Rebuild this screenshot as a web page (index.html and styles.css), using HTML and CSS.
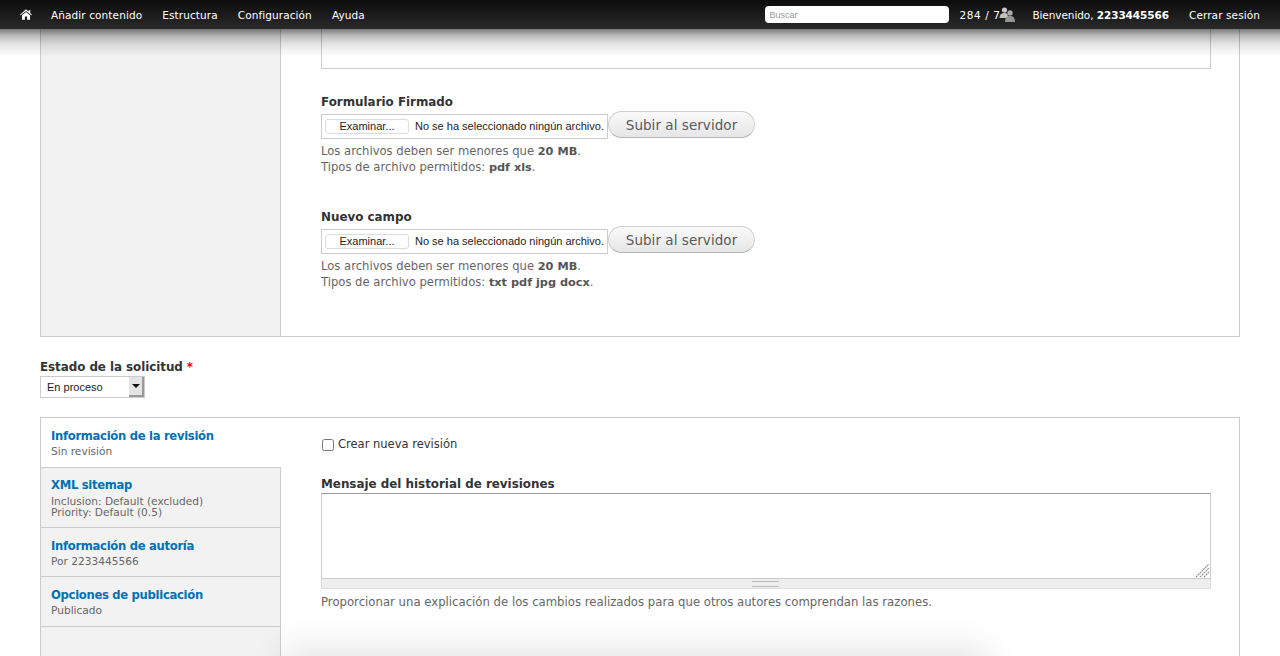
FILE: index.html
```html
<!DOCTYPE html>
<html lang="es">
  <head>
    <meta charset="UTF-8" />
    <title>Editar solicitud</title>
    <link rel="stylesheet" href="styles.css">
  </head>
  <body>
    <div class="toolbar">
      <nav class="toolbar-menu">
        <a class="home-link" href="#">
          <svg width="12" height="11" viewBox="0 0 14 12"><path fill="#fff" d="M7 0 L10 2.7 V1 H12 V4.5 L14 6.3 L13.2 7 L7 1.8 L.8 7 L0 6.3 Z M2.3 7 L7 3 L11.7 7 V12 H8.3 V8.3 H5.7 V12 H2.3 Z"/></svg>
        </a>
        <a href="#">Añadir contenido</a>
        <a href="#">Estructura</a>
        <a href="#">Configuración</a>
        <a href="#">Ayuda</a>
      </nav>
      <div class="toolbar-user">
        <input class="search" type="text" placeholder="Buscar" />
        <span class="counter">284 / 7</span>
        <svg class="users-icon" width="16" height="15" viewBox="0 0 16 15">
          <circle cx="5.5" cy="3" r="2.6" fill="#c8c8c8"/>
          <path fill="#c0c0c0" d="M.5 11 C.5 7 3 6 5.5 6 C8 6 9 7 9 11 Z"/>
          <circle cx="11" cy="6" r="2.7" fill="#a8a8a8"/>
          <path fill="#949494" d="M6 15 C6 10.5 8 9 11 9 C14 9 16 10.5 16 15 Z"/>
        </svg>
        <span class="welcome">Bienvenido, <strong>2233445566</strong></span>
        <a href="#">Cerrar sesión</a>
      </div>
    </div>

    <div class="page">
      <section class="panel files-panel">
        <div class="panel-side"></div>
        <div class="panel-main">
          <div class="old-text"></div>

          <div class="form-item">
            <label>Formulario Firmado</label>
            <div class="file-row">
              <div class="file-input">
                <span class="file-btn">Examinar...</span>
                <span>No se ha seleccionado ningún archivo.</span>
              </div>
              <button class="submit-btn">Subir al servidor</button>
            </div>
            <p class="description">Los archivos deben ser menores que <strong>20 MB</strong>.<br>Tipos de archivo permitidos: <strong>pdf xls</strong>.</p>
          </div>

          <div class="form-item">
            <label>Nuevo campo</label>
            <div class="file-row">
              <div class="file-input">
                <span class="file-btn">Examinar...</span>
                <span>No se ha seleccionado ningún archivo.</span>
              </div>
              <button class="submit-btn">Subir al servidor</button>
            </div>
            <p class="description">Los archivos deben ser menores que <strong>20 MB</strong>.<br>Tipos de archivo permitidos: <strong>txt pdf jpg docx</strong>.</p>
          </div>
        </div>
      </section>

      <div class="status-item">
        <label>Estado de la solicitud <span class="required">*</span></label>
        <div class="select-box">
          <span>En proceso</span>
          <span class="select-arrow"></span>
        </div>
      </div>

      <section class="panel tabs-panel">
        <ul class="tabs">
          <li class="tab active"><a href="#">Información de la revisión</a><small>Sin revisión</small></li>
          <li class="tab tab-sitemap"><a href="#">XML sitemap</a><small>Inclusion: Default (excluded)</small><small>Priority: Default (0.5)</small></li>
          <li class="tab tab-author"><a href="#">Información de autoría</a><small>Por 2233445566</small></li>
          <li class="tab"><a href="#">Opciones de publicación</a><small>Publicado</small></li>
        </ul>
        <div class="tab-pane">
          <div class="check-row">
            <input type="checkbox" id="new-revision" />
            <label for="new-revision">Crear nueva revisión</label>
          </div>
          <label class="log-label" for="log">Mensaje del historial de revisiones</label>
          <div class="textarea-wrap">
            <textarea id="log"></textarea>
            <svg class="resize-grip" width="15" height="15" viewBox="0 0 15 15">
              <path stroke="#8c8c8c" stroke-width="1.1" stroke-dasharray="2 .6" fill="none" d="M1 14 L14 1 M5 14 L14 5 M9 14 L14 9"/>
            </svg>
          </div>
          <div class="grippie"></div>
          <p class="description wide">Proporcionar una explicación de los cambios realizados para que otros autores comprendan las razones.</p>
        </div>
      </section>
    </div>

    <div class="bottom-shade"></div>
  </body>
</html>
```

FILE: styles.css
```css
html, body {
  margin: 0;
  height: 656px;
  overflow: hidden;
  background: #fff;
}

body {
  font-family: "DejaVu Sans", sans-serif;
  font-size: 11.9px;
  color: #333;
}

a {
  text-decoration: none;
}

/* toolbar */
.toolbar {
  position: fixed;
  top: 0;
  left: 0;
  right: 0;
  height: 29px;
  z-index: 10;
  display: flex;
  justify-content: space-between;
  align-items: center;
  padding: 0 20px;
  background: linear-gradient(#0c0c0c, #2a2a2a);
  color: #fff;
  font-size: 10.5px;
  letter-spacing: 0.1px;
}

/* soft shadow under the bar */
.toolbar::after {
  content: "";
  position: absolute;
  left: 0;
  right: 0;
  top: 29px;
  height: 28px;
  background: linear-gradient(rgba(0, 0, 0, 0.52), rgba(0, 0, 0, 0.26) 25%, rgba(0, 0, 0, 0.1) 55%, rgba(0, 0, 0, 0));
}

.toolbar a {
  color: #fff;
}

.toolbar-menu {
  display: flex;
  align-items: center;
  gap: 20px;
}

.home-link {
  display: flex;
  margin-right: -1px;
}

.toolbar-user {
  display: flex;
  align-items: center;
}

.search {
  width: 184px;
  height: 17px;
  box-sizing: border-box;
  margin: 0 10px 0 0;
  padding: 0 4px;
  border: 0;
  border-radius: 4px;
  background: #fff;
  font-family: "Liberation Sans", sans-serif;
  font-size: 9px;
}

.search::placeholder {
  color: #999;
}

.counter {
  letter-spacing: 0.6px;
  width: 40px;
  white-space: nowrap;
}

.users-icon {
  margin: 0 17px 0 0;
}

.welcome {
  margin-right: 20px;
  letter-spacing: -0.08px;
}

/* panels */
.page {
  padding: 0 40px;
}

.panel {
  display: flex;
  border: 1px solid #ccc;
  background: #fff;
}

.files-panel {
  height: 337px;
  box-sizing: border-box;
  border-top: 0;
}

.panel-side {
  width: 239px;
  background: #f2f2f2;
  border-right: 1px solid #ccc;
}

.panel-main {
  flex: 1;
  padding: 0 28px 0 40px;
}

.old-text {
  height: 68px;
  border: 1px solid #ccc;
  border-top: 0;
}

.form-item {
  margin-top: 26px;
  height: 90px;
}

.form-item + .form-item {
  margin-top: 25px;
}

label {
  font-weight: bold;
  color: #333;
  display: block;
}

.form-item label {
  line-height: 15px;
  margin-bottom: 4px;
}

.file-row {
  display: flex;
  align-items: flex-start;
  margin-top: -3px;
}

.file-input {
  width: 287px;
  height: 25px;
  margin-top: 3px;
  box-sizing: border-box;
  border: 1px solid #ccc;
  display: flex;
  align-items: center;
  padding: 0 0 1px 3px;
  gap: 6px;
  font-family: "Liberation Sans", sans-serif;
  font-size: 11px;
  color: #222;
  white-space: nowrap;
}

.file-btn {
  width: 84px;
  height: 15px;
  flex: none;
  box-sizing: border-box;
  border: 1px solid #ddd;
  border-radius: 3px;
  background: #fff;
  text-align: center;
  line-height: 13px;
}

.submit-btn {
  width: 147px;
  height: 27px;
  padding: 1px 0 0;
  border: 1px solid #d0d0d0;
  border-bottom-color: #b4b4b4;
  border-radius: 14px;
  background: linear-gradient(#fafafa, #e6e6e6);
  font-family: "DejaVu Sans", sans-serif;
  font-size: 13.5px;
  letter-spacing: 0.05px;
  color: #5a5a5a;
}

.description {
  margin: 4px 0 0;
  color: #666;
  font-size: 11.6px;
  line-height: 16px;
}

.description strong {
  color: #555;
  font-size: 11.3px;
  line-height: 1;
}

.description.wide {
  margin-top: 5px;
  font-size: 11.7px;
}

/* status select */
.status-item {
  margin-top: 22px;
}

.status-item label {
  line-height: 16px;
  margin-bottom: 1px;
  letter-spacing: -0.05px;
}

.required {
  color: #e00;
}

.select-box {
  width: 105px;
  height: 22px;
  box-sizing: border-box;
  border: 1px solid #ccc;
  display: flex;
  justify-content: space-between;
  padding-left: 6px;
  font-family: "Liberation Sans", sans-serif;
  font-size: 11px;
  line-height: 20px;
  color: #222;
}

.select-arrow {
  width: 15px;
  background: #e4e4e4;
  border-right: 2px solid #999;
  border-bottom: 2px solid #999;
  box-sizing: border-box;
  position: relative;
}

.select-arrow::after {
  content: "";
  position: absolute;
  left: 3px;
  top: 7px;
  border: 4px solid transparent;
  border-top: 4px solid #111;
  border-bottom: 0;
}

/* vertical tabs */
.tabs-panel {
  margin-top: 19px;
  height: 300px;
}

.tabs {
  width: 239px;
  flex: none;
  margin: 0;
  padding: 0;
  list-style: none;
  background: #f2f2f2;
  border-right: 1px solid #ccc;
}

.tab {
  padding: 10px 10px 10px;
  border-bottom: 1px solid #ccc;
}

.tab.active {
  margin-right: -1px;
  background: #fff;
}

.tab-sitemap {
  padding: 9px 10px 9px;
}

.tab-author {
  padding-bottom: 9px;
}

.tab a {
  display: block;
  color: #0071b3;
  font-weight: bold;
  font-size: 11.6px;
  letter-spacing: -0.3px;
  line-height: 16px;
}

.tab small {
  display: block;
  color: #666;
  font-size: 10.6px;
  line-height: 11px;
  margin-top: 2px;
}

.tab-sitemap small {
  margin-top: 3px;
}

.tab small + small {
  margin-top: 0;
}

.tab-pane {
  flex: 1;
  padding: 19px 28px 0 40px;
}

.check-row {
  display: flex;
  align-items: center;
  gap: 4px;
}

.check-row input {
  width: 12px;
  height: 12px;
  margin: 1px 0 0 1px;
}

.check-row label {
  font-weight: normal;
  font-size: 11.5px;
}

.log-label {
  margin-top: 25px;
  line-height: 16px;
  margin-bottom: 1px;
}

.textarea-wrap {
  position: relative;
}

textarea {
  display: block;
  width: 100%;
  height: 86px;
  box-sizing: border-box;
  margin: 0;
  border: 1px solid #ccc;
  border-top-color: #999;
  resize: none;
}

.resize-grip {
  position: absolute;
  right: 1px;
  bottom: 1px;
}

.grippie {
  height: 9px;
  background: #eee;
  border: 1px solid #ddd;
  border-top: 0;
  position: relative;
}

.grippie::after {
  content: "";
  position: absolute;
  left: 50%;
  top: 2px;
  width: 27px;
  margin-left: -14px;
  height: 4px;
  border-top: 1px solid #bbb;
  border-bottom: 1px solid #bbb;
}

.bottom-shade {
  position: fixed;
  left: 290px;
  width: 690px;
  bottom: -26px;
  height: 26px;
  box-shadow: 0 0 36px 6px rgba(0, 0, 0, 0.12);
}
```
